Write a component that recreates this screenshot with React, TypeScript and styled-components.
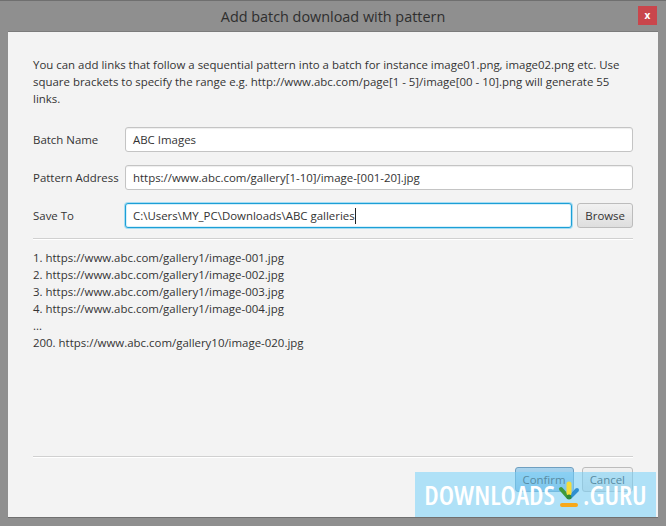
import React from 'react';
import styled, { createGlobalStyle } from 'styled-components';

const Global = createGlobalStyle`
  html, body {
    margin: 0;
    padding: 0;
    background: #8f8f8f;
  }
`;

function App() {
  return (
    <>
      <Global />
      <Frame>
        <TitleBar>
          <Title>Add batch download with pattern</Title>
          <CloseButton>x</CloseButton>
        </TitleBar>
        <Content>
          <Intro>
            You can add links that follow a sequential pattern into a batch for instance image01.png, image02.png etc. Use
            square brackets to specify the range e.g. http://www.abc.com/page[1 - 5]/image[00 - 10].png will generate 55
            links.
          </Intro>
          <Form>
            <Row>
              <Label>Batch Name</Label>
              <Field>ABC Images</Field>
            </Row>
            <Row>
              <Label>Pattern Address</Label>
              <Field>https://www.abc.com/gallery[1-10]/image-[001-20].jpg</Field>
            </Row>
            <Row>
              <Label>Save To</Label>
              <Field $focused>
                C:\Users\MY_PC\Downloads\ABC galleries
                <Caret />
              </Field>
              <Button>Browse</Button>
            </Row>
          </Form>
          <Divider />
          <Preview>
            <div>1. https://www.abc.com/gallery1/image-001.jpg</div>
            <div>2. https://www.abc.com/gallery1/image-002.jpg</div>
            <div>3. https://www.abc.com/gallery1/image-003.jpg</div>
            <div>4. https://www.abc.com/gallery1/image-004.jpg</div>
            <div>...</div>
            <div>200. https://www.abc.com/gallery10/image-020.jpg</div>
          </Preview>
          <Divider />
          <Footer>
            <Button $primary>Confirm</Button>
            <Button>Cancel</Button>
          </Footer>
        </Content>
        <Watermark>
          <span>DOWNLOADS</span>
          <svg width="22" height="28" viewBox="0 0 22 28">
            <path d="M3 8 L10 16" stroke="#3f9a3c" strokeWidth="4" strokeLinecap="round" />
            <path d="M19 9 L12 16" stroke="#2f8fd0" strokeWidth="4" strokeLinecap="round" />
            <path d="M11 3 L11 12" stroke="#f5dc3a" strokeWidth="5" strokeLinecap="round" />
            <circle cx="11" cy="16" r="2.500" fill="#2f8a3a" />
            <rect x="2" y="22" width="18" height="4" rx="2" fill="#f7a81b" />
          </svg>
          <span>.GURU</span>
        </Watermark>
      </Frame>
    </>
  );
}

const Frame = styled.div`
  position: relative;
  width: 666px;
  height: 526px;
  box-sizing: border-box;
  background: #8f8f8f;
  border-top: 1px solid #6f6f6f;
  padding: 0 8px 8px;
  display: flex;
  flex-direction: column;
  font-family: "Open Sans", "Noto Sans", sans-serif;
  overflow: hidden;
`;

const TitleBar = styled.div`
  height: 30px;
  flex: none;
  display: flex;
  align-items: center;
  justify-content: center;
  position: relative;
  border-bottom: 1px solid #7b7b7b;
`;

const Title = styled.div`
  font-size: 14.4px;
  color: #2e2e2e;
`;

const CloseButton = styled.div`
  position: absolute;
  right: 1px;
  top: 5px;
  width: 19px;
  height: 19px;
  background: #c9464c;
  color: #fff;
  font-size: 10px;
  font-weight: 700;
  line-height: 18px;
  text-align: center;
`;

const Content = styled.div`
  flex: 1;
  background: #f3f3f3;
  padding: 24px 25px 0;
  display: flex;
  flex-direction: column;
  border-bottom: 1px solid #707070;
`;

const Intro = styled.div`
  font-size: 11.45px;
  line-height: 17px;
  color: #333;
  height: 51px;
`;

const Form = styled.div`
  display: flex;
  flex-direction: column;
  gap: 13px;
  margin-top: 20px;
`;

const Row = styled.div`
  display: flex;
  align-items: center;
  height: 25px;
  gap: 5px;
`;

const Label = styled.div`
  width: 87px;
  flex: none;
  font-size: 11.45px;
  color: #333;
`;

const Field = styled.div<{ $focused?: boolean }>`
  flex: 1;
  height: 25px;
  box-sizing: border-box;
  display: flex;
  align-items: center;
  padding: 0 7px;
  background: #fff;
  font-size: 11.45px;
  color: #333;
  border-radius: 3px;
  border: 1px solid ${(p) => (p.$focused ? '#1c9fd6' : '#c4c4c4')};
  box-shadow: ${(p) => (p.$focused ? '0 0 0 1px #a6dcf2, inset 0 0 0 1px #d7f0fa' : 'inset 0 1px 1px #eee')};
  white-space: pre;
`;

const Caret = styled.span`
  width: 1px;
  height: 16px;
  background: #222;
`;

const Button = styled.div<{ $primary?: boolean }>`
  height: 25px;
  box-sizing: border-box;
  padding: 0 7px;
  display: flex;
  align-items: center;
  justify-content: center;
  border: 1px solid ${(p) => (p.$primary ? '#6f9fc0' : '#bcbcbc')};
  border-radius: 3px;
  background: ${(p) => (p.$primary ? 'linear-gradient(#a9d4ee, #8ab8dc)' : 'linear-gradient(#f1f1f1, #dedede)')};
  font-size: 11.45px;
  color: #333;
`;

const Divider = styled.div`
  height: 1px;
  flex: none;
  background: #d0d0d0;
  box-shadow: 0 1px 0 #fff;
  margin-top: 10px;
`;

const Preview = styled.div`
  flex: 1;
  padding-top: 10px;
  font-size: 11.45px;
  line-height: 17px;
  color: #333;
`;

const Footer = styled.div`
  display: flex;
  justify-content: flex-end;
  align-items: flex-start;
  gap: 8px;
  height: 60px;
  padding-top: 10px;
  box-sizing: border-box;
`;

const Watermark = styled.div`
  position: absolute;
  left: 415px;
  top: 471px;
  width: 241px;
  height: 45px;
  background: rgba(118, 209, 249, 0.55);
  display: flex;
  align-items: center;
  justify-content: center;
  gap: 3px;
  color: #fff;
  font-stretch: condensed;
  font-size: 27px;
  font-weight: 600;
`;

export default App;
